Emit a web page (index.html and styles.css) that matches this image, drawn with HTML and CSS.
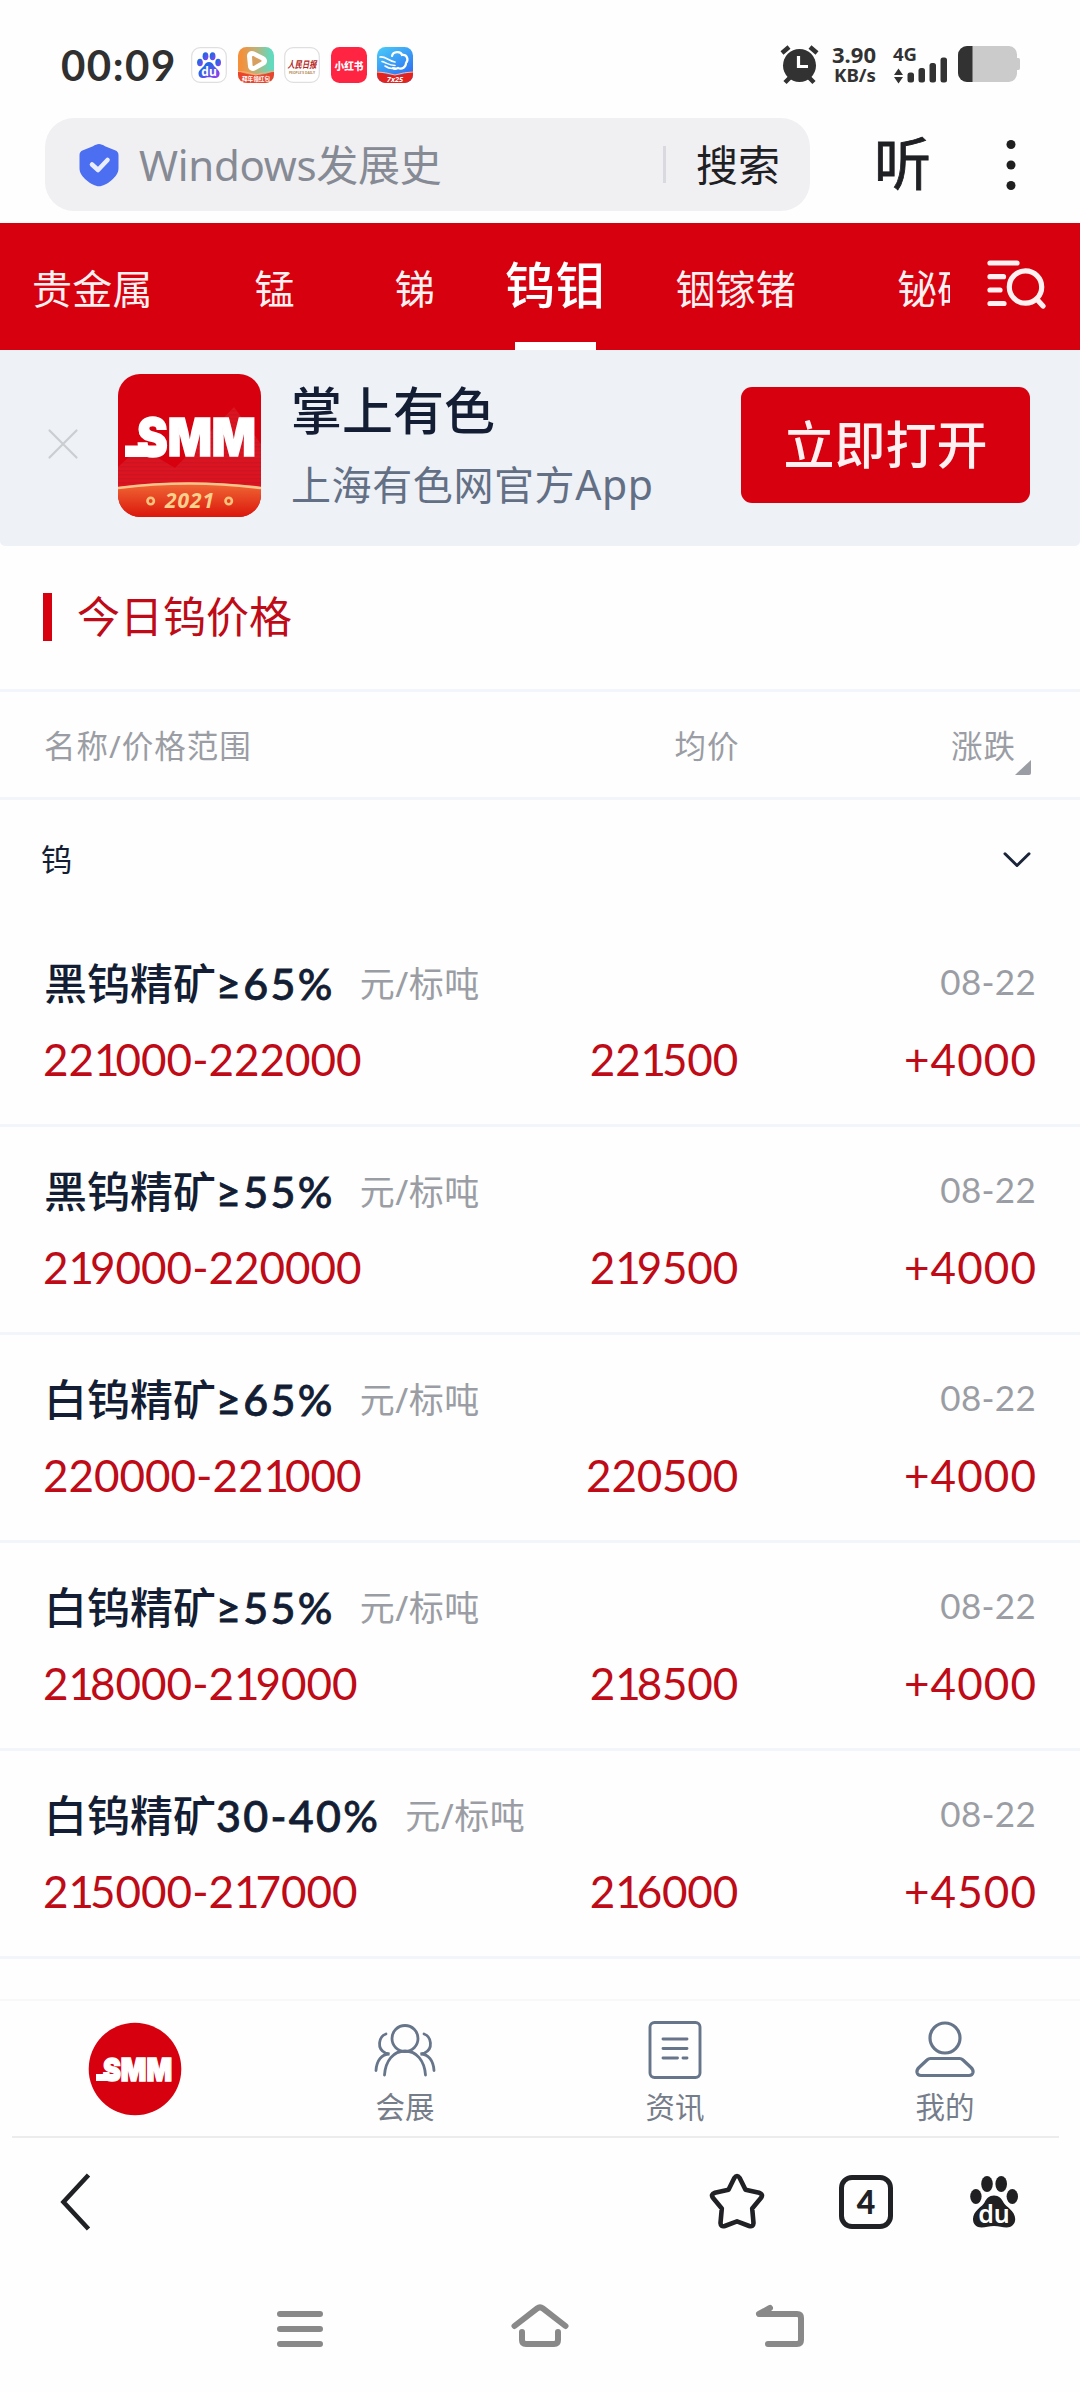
FILE: index.html
```html
<!DOCTYPE html>
<html lang="zh-CN">
<head>
<meta charset="utf-8">
<title>今日钨价格</title>
<link rel="stylesheet" href="styles.css">
</head>
<body>
<svg class="defs" aria-hidden="true">
  <symbol id="paw" viewBox="0 0 48 52">
    <ellipse cx="17" cy="8" rx="5.8" ry="8"/><ellipse cx="31.2" cy="8" rx="5.8" ry="8"/>
    <ellipse cx="5.9" cy="20.5" rx="5.7" ry="7.6"/><ellipse cx="42.3" cy="20.5" rx="5.7" ry="7.6"/>
    <path d="M24 19.500c5 0 7.500 3 9.500 7 2 4 11.700 8.500 11.700 16.500 0 5.500-4 8.500-8.500 8.500-4.500 0-7.700-1.500-12.700-1.500s-8.200 1.500-12.500 1.500c-5 0-8.500-3-8.500-8.500 0-8 9.500-12.500 11.500-16.500 2-4 4.500-7 9.500-7z"/>
  </symbol>
</svg>
<div class="screen">
  <header class="status">
    <span class="clock">00:09</span>
    <div class="apps">
      <svg class="app" viewBox="0 0 36 36"><defs><linearGradient id="pg" x1="0" y1="0" x2="1" y2="1"><stop offset=".3" stop-color="#2468e6"/><stop offset="1" stop-color="#9a3cf0"/></linearGradient></defs><rect x=".7" y=".7" width="34.600" height="34.600" rx="8.500" fill="#fff" stroke="#dfdfe1" stroke-width="1.200"/><svg x="6" y="5" width="24" height="26.500" fill="url(#pg)"><use href="#paw"/></svg><text x="18" y="29" text-anchor="middle" font-size="12" font-weight="700" fill="#fff">du</text></svg>
      <svg class="app" viewBox="0 0 36 36"><defs><linearGradient id="vg"><stop offset=".1" stop-color="#f4903a"/><stop offset=".45" stop-color="#c7ad70"/><stop offset=".9" stop-color="#63d9bd"/></linearGradient></defs><rect width="36" height="36" rx="8.500" fill="url(#vg)"/><path d="M0 24q9 4 18 4t18-4v3.500a8.500 8.500 0 0 1-8.500 8.500h-19a8.500 8.500 0 0 1-8.500-8.500z" fill="#e9452c"/><path d="M0 24.500q8 0 18 3.500 10-3.500 18-3.500" stroke="#ffab79" stroke-width="1.200" fill="none"/><path d="M14 9l10 5-9 5z" fill="none" stroke="#fff" stroke-width="10" stroke-linejoin="round"/><path d="M15 10l7.500 4-7 4z" fill="#d8a060" stroke="#d8a060" stroke-width="2" stroke-linejoin="round"/><text x="18" y="34.400" text-anchor="middle" font-size="5.600" font-weight="700" fill="#fff">拜年领红包</text></svg>
      <svg class="app" viewBox="0 0 36 36"><rect x=".7" y=".7" width="34.600" height="34.600" rx="8.500" fill="#fff" stroke="#dfdfe1" stroke-width="1.200"/><text class="brush" x="3.500" y="20.500" font-size="9.500" fill="#b51f24" textLength="29" lengthAdjust="spacingAndGlyphs">人民日报</text><text x="5" y="27" font-size="3.800" font-weight="700" fill="#b58a55" textLength="26" lengthAdjust="spacingAndGlyphs">PEOPLE'S DAILY</text></svg>
      <svg class="app" viewBox="0 0 36 36"><rect width="36" height="36" rx="8.500" fill="#ff2442"/><text x="3.500" y="22.500" font-size="10.500" font-weight="900" fill="#fff" textLength="29" lengthAdjust="spacingAndGlyphs">小红书</text></svg>
      <svg class="app" viewBox="0 0 36 36"><defs><linearGradient id="cg" x1="0" y1="0" x2=".6" y2="1"><stop stop-color="#49cdf8"/><stop offset="1" stop-color="#2e6df2"/></linearGradient></defs><rect width="36" height="36" rx="8.500" fill="url(#cg)"/><path d="M0 24q9 4 18 4t18-4v3.500a8.500 8.500 0 0 1-8.500 8.500h-19a8.500 8.500 0 0 1-8.500-8.500z" fill="#e3231f"/><path d="M0 25q8 0 18 3 10-3 18-3" stroke="#ffb5a0" stroke-width="1" fill="none"/><g fill="none" stroke="#fff" stroke-linecap="round"><path d="M3 10c5-1 9 4 15 5M5 14.500c4 1 7 4 13 4M8 19c3 2 7 3 10 2" stroke-width="1.600"/><path d="M15 9c1-5 9-5 10-1 5-1 7 5 4 8 0 4-4 7-8 5-2 1-4 1-5 0" stroke-width="2.200"/></g><text x="18" y="34.500" text-anchor="middle" font-size="7.500" font-weight="700" font-style="italic" fill="#fff">7x25</text></svg>
    </div>
    <svg class="sys" viewBox="0 0 244 40">
      <g fill="none" stroke="#323232" stroke-width="4.500"><path d="M2 7l7-6M30 1l7 6"/><path d="M5 36.500l5-5M34 36.500l-5-5"/></g><circle cx="19.500" cy="19.500" r="16.500" fill="#323232"/><path d="M18.500 10v10.500h9.500" fill="none" stroke="#fff" stroke-width="3.200"/>
      <g fill="#323232"><text x="52" y="16.500" font-size="22" font-weight="700" textLength="44" lengthAdjust="spacingAndGlyphs">3.90</text><text x="54" y="35.500" font-size="18.500" font-weight="700" textLength="42" lengthAdjust="spacingAndGlyphs">KB/s</text><text x="113" y="14.500" font-size="18.500" font-weight="700" textLength="24" lengthAdjust="spacingAndGlyphs">4G</text>
      <path d="M114 29l4.500-6.500 4.500 6.500zM114 31l4.500 6.500 4.500-6.500z"/><rect x="127.500" y="26.500" width="6.500" height="10" rx="2.500"/><rect x="138.500" y="22" width="6.500" height="14.500" rx="2.500"/><rect x="149.500" y="17" width="6.500" height="19.500" rx="2.500"/><rect x="160.500" y="11.500" width="6.500" height="25" rx="2.500"/></g>
      <path d="M187 0h42a8.500 8.500 0 0 1 8 9v3h1.500q1.500 0 1.500 2v8q0 2-1.500 2h-1.500v3a8.500 8.500 0 0 1-8 9h-42a9 9 0 0 1-9-9v-18a9 9 0 0 1 9-9z" fill="#cbcbcb"/><path d="M187 0h5.500v36h-5.500a9 9 0 0 1-9-9v-18a9 9 0 0 1 9-9z" fill="#323232"/>
    </svg>
  </header>

  <div class="address">
    <div class="search">
      <svg class="shield" viewBox="0 0 40 42"><path d="M20 0c2 0 4 1 6 2.200l10 4c2.500 1 3.500 2.500 3.500 5v13c0 5-3 8.500-7 12-4 3.500-9 6-12.500 6s-8.500-2.500-12.500-6c-4-3.500-7-7-7-12v-13c0-2.500 1-4 3.500-5l10-4c2-1.200 4-2.200 6-2.200z" fill="#4c6ef1"/><path d="M13 20.500l6 5.500 9.500-10" fill="none" stroke="#e9edfc" stroke-width="4.600" stroke-linecap="round" stroke-linejoin="round"/></svg>
      <span class="query">Windows发展史</span>
      <span class="rule"></span>
      <span class="go">搜索</span>
    </div>
    <span class="listen">听</span>
    <svg class="more" viewBox="0 0 10 52"><g fill="#1f1f20"><circle cx="5" cy="5.500" r="4.500"/><circle cx="5" cy="26" r="4.500"/><circle cx="5" cy="46.500" r="4.500"/></g></svg>
  </div>

  <nav class="metals">
    <div class="tabs">
      <span>贵金属</span><span class="t2">锰</span><span class="t3">锑</span><span class="active">钨钼</span><span class="t5">铟镓锗</span><span class="t6">铋硒碲</span>
    </div>
    <svg class="find" viewBox="0 0 60 50"><g fill="none" stroke="#fff0f1" stroke-width="5.200" stroke-linecap="round"><path d="M3 5h27M3 18.700h13.500M3 32h10M3 45.500h14"/><circle cx="38.500" cy="29" r="16.200"/><path d="M50.500 42l5.500 6"/></g></svg>
  </nav>

  <section class="promo">
    <svg class="close" viewBox="0 0 30 30"><path d="M1.500 1.500l27 27M28.500 1.500l-27 27" stroke="#cbcdd1" stroke-width="2.200" stroke-linecap="round"/></svg>
    <svg class="logo" viewBox="0 0 143 143">
      <defs><clipPath id="lc"><rect width="143" height="143" rx="22"/></clipPath><linearGradient id="rib" x1="0" y1="0" x2="0" y2="1"><stop stop-color="#f06a36"/><stop offset="1" stop-color="#db160c"/></linearGradient>
      <pattern id="st" width="4" height="4" patternUnits="userSpaceOnUse"><rect width="4" height="1.500" fill="#b91622"/></pattern></defs>
      <g clip-path="url(#lc)"><rect width="143" height="143" fill="#d7000f"/><path d="M0 93l22-20 35 21 59-61 27 37v50h-143z" fill="#dc1421"/><path d="M0 93l22-20 35 21 59-61 27 37v50h-143z" fill="url(#st)" opacity=".45"/>
      <path d="M0 113q71-9 143 0v30h-143z" fill="url(#rib)"/><path d="M0 114q71-9 143 0" fill="none" stroke="#ffc58a" stroke-width="2.600"/></g>
      <text class="mark" x="19" y="82" font-size="52" textLength="119" lengthAdjust="spacingAndGlyphs">SMM</text><path d="M7 71.500h34v11.500h-34z" fill="#fff"/>
      <text x="47" y="134" font-size="21" font-weight="700" font-style="italic" fill="#ffd08c" textLength="49">2021</text>
      <g fill="none" stroke="#ffc27c" stroke-width="2.600"><circle cx="32.700" cy="127" r="3.200"/><circle cx="110.700" cy="127" r="3.200"/></g>
    </svg>
    <div class="pitch"><div class="name">掌上有色</div><div class="sub">上海有色网官方<span>App</span></div></div>
    <div class="open">立即打开</div>
  </section>

  <main class="prices">
    <h1 class="title">今日钨价格</h1>
    <div class="line head"><span>名称/价格范围</span><span class="avg">均价</span><span class="chg">涨跌</span><svg class="sort" viewBox="0 0 16 15"><path d="M0 15l16-15v13q0 2-2 2z" fill="#9b9da4"/></svg></div>
    <div class="group"><span>钨</span><svg class="chev" viewBox="0 0 28 16"><path d="M2 1.800l12 11.700 12-11.700" fill="none" stroke="#1b2539" stroke-width="3" stroke-linecap="round" stroke-linejoin="round"/></svg></div>

    <article class="item"><div class="line"><b>黑钨精矿<i>≥65%</i></b><span class="unit">元/标吨</span><time>08-22</time></div><div class="line num"><span>22<u>1</u>000-222000</span><span class="avg">22<u>1</u>500</span><span class="chg">+4000</span></div></article>
    <article class="item"><div class="line"><b>黑钨精矿<i>≥55%</i></b><span class="unit">元/标吨</span><time>08-22</time></div><div class="line num"><span>2<u>1</u>9000-220000</span><span class="avg">2<u>1</u>9500</span><span class="chg">+4000</span></div></article>
    <article class="item"><div class="line"><b>白钨精矿<i>≥65%</i></b><span class="unit">元/标吨</span><time>08-22</time></div><div class="line num"><span>220000-22<u>1</u>000</span><span class="avg">220500</span><span class="chg">+4000</span></div></article>
    <article class="item"><div class="line"><b>白钨精矿<i>≥55%</i></b><span class="unit">元/标吨</span><time>08-22</time></div><div class="line num"><span>2<u>1</u>8000-2<u>1</u>9000</span><span class="avg">2<u>1</u>8500</span><span class="chg">+4000</span></div></article>
    <article class="item"><div class="line"><b>白钨精矿<i>30-40%</i></b><span class="unit">元/标吨</span><time>08-22</time></div><div class="line num"><span>2<u>1</u>5000-2<u>1</u>7000</span><span class="avg">2<u>1</u>6000</span><span class="chg">+4500</span></div></article>
  </main>

  <nav class="sections">
    <div class="sec"><svg class="disc" viewBox="0 0 94 94"><circle cx="47" cy="47" r="46.300" fill="#d7000f"/><text class="mark" x="15" y="58.500" font-size="31.500" textLength="69" lengthAdjust="spacingAndGlyphs">SMM</text><path d="M8 52h20v7h-20z" fill="#fff"/></svg></div>
    <div class="sec"><svg class="ico" viewBox="0 0 64 60"><g fill="none" stroke="#66758a" stroke-width="2.800" stroke-linecap="round"><circle cx="32" cy="17.500" r="13"/><path d="M11.500 54c1-14.500 9-24 20.500-24s19.500 9.500 20.500 24"/><path d="M13 13c-7.500 2.500-9.500 15-.5 19l4 1c-8 0-13 7-13.500 16.500M51 13c7.500 2.500 9.500 15 .5 19l-4 1c8 0 13 7 13.500 16.500"/></g></svg><span>会展</span></div>
    <div class="sec"><svg class="ico" viewBox="0 0 64 60"><g fill="none" stroke="#66758a" stroke-width="2.900" stroke-linecap="round"><rect x="7" y="1.500" width="50" height="55" rx="4.500"/><path d="M20 18h24M20 27.500h24M20 37h14.500M40 37h4"/></g></svg><span>资讯</span></div>
    <div class="sec"><svg class="ico" viewBox="0 0 64 60"><g fill="none" stroke="#66758a" stroke-width="3.200" stroke-linejoin="round"><circle cx="32" cy="17" r="15"/><path d="M17.500 37.500h29q2 0 3.500 1.500l8 7.500q2.500 2.500 2 5-.7 3-4 3h-48q-3.300 0-4-3-.5-2.500 2-5l8-7.500q1.500-1.500 3.500-1.500z"/></g></svg><span>我的</span></div>
  </nav>

  <div class="toolbar">
    <svg class="prev" viewBox="0 0 32 60"><path d="M28.500 3l-25 27 25 27" fill="none" stroke="#202125" stroke-width="4.600"/></svg>
    <svg class="star" viewBox="0 0 56 56"><path d="M25.300 4q2.700-4 5.400 0l5.800 11.800 13.600 3q4.500 1.500 2 5l-8.900 10.700 1.300 14.500q-.3 4.300-4.300 3l-12.200-4.700-12.200 4.700q-4 1.300-4.300-3l1.300-14.500-8.900-10.700q-2.500-3.500 2-5l13.600-3z" fill="none" stroke="#202125" stroke-width="4.600" stroke-linejoin="round"/></svg>
    <div class="count">4</div>
    <svg class="du" viewBox="0 0 48 52"><g fill="#202022"><use href="#paw"/></g><text x="24" y="46.500" text-anchor="middle" font-size="25" fill="#fff" font-weight="600">du</text></svg>
  </div>

  <footer class="keys">
    <svg viewBox="0 0 60 50"><path d="M10 12h40M10 27h40M10 42h40"/></svg>
    <svg viewBox="0 0 60 50"><path d="M4.500 24l22.700-17.600q2.800-2.200 5.600 0l22.700 17.600M12 30v8q0 4 4 4h28q4 0 4-4v-8"/></svg>
    <svg viewBox="0 0 60 50"><path d="M20 6l-11 6h38q4 0 4 4v22q0 4-4 4h-29"/></svg>
  </footer>
</div>
</body>
</html>
```
FILE: styles.css
```css
* { box-sizing: border-box; }
body { margin: 0; background: #fefefe; font-family: "Noto Sans", "Noto Sans CJK SC", sans-serif; color: #131d33; }
svg { display: block; flex: none; overflow: visible; }
.defs { position: absolute; width: 0; height: 0; }
.screen { width: 1080px; height: 2392px; display: flex; flex-direction: column; overflow: hidden; }
.screen > * { flex: none; }
.mark { font-family: "Inter", sans-serif; font-weight: 900; fill: #fff; stroke: #fff; stroke-width: 1.5; }

.status { height: 118px; padding: 12px 60px 0 61px; display: flex; align-items: center; }
.clock { width: 130px; font: 700 42px/1 "Lato", sans-serif; letter-spacing: 1.500px; color: #303030; }
.apps { display: flex; gap: 10.500px; }
.app { width: 36px; height: 36px; }
.brush { font-style: italic; font-weight: 700; }
.sys { width: 244px; height: 40px; margin: 2px -4px 0 auto; }

.address { height: 105px; padding: 0 0 12px 45px; display: flex; align-items: center; }
.search { width: 765px; height: 93px; border-radius: 29px; background: #f0f0f3; display: flex; align-items: center; padding: 0 30px 0 34px; }
.shield { width: 40px; height: 42px; }
.query { margin-left: 20px; font-size: 42px; line-height: 60px; letter-spacing: -.3px; color: #868a94; white-space: nowrap; }
.rule { width: 3px; height: 37px; margin-left: auto; background: #d9d9e0; }
.go { margin-left: 30px; font-size: 42px; line-height: 60px; color: #1f2024; }
.listen { width: 58px; margin: 0 0 4px 64px; font-size: 57px; line-height: 80px; color: #1f2024; -webkit-text-stroke: .8px #1f2024; }
.more { width: 10px; height: 52px; margin-left: 74px; }

.metals { height: 127px; background: #d7000f; display: flex; }
.tabs { width: 950px; overflow: hidden; padding-left: 32px; display: flex; font-size: 40px; line-height: 131px; letter-spacing: .2px; color: #fff0f1; white-space: nowrap; }
.tabs span { flex: none; }
.t2 { margin-left: 102px; }
.t3 { margin-left: 100px; }
.t5 { margin-left: 70px; }
.t6 { margin-left: 101px; }
.tabs .active { margin-left: 70px; font-size: 50px; font-weight: 500; line-height: 125px; color: #fff; height: 127px; background: linear-gradient(#fff, #fff) 50% 100% / 81px 8px no-repeat; }
.find { width: 60px; height: 50px; margin: 35px 0 0 37px; }

.promo { height: 196px; background: #eef1f6; border-radius: 0 0 5px 5px; padding-left: 48px; display: flex; align-items: center; }
.close { width: 30px; height: 30px; margin-bottom: 9px; }
.logo { width: 143px; height: 143px; margin: 0 0 5px 40px; }
.pitch { width: 450px; margin: 0 0 2px 30px; white-space: nowrap; }
.name { font-size: 51px; line-height: 74px; font-weight: 500; }
.sub { font-size: 40px; line-height: 74px; letter-spacing: .6px; color: #626f84; }
.sub span { font-size: 41px; }
.open { width: 289px; height: 116px; margin-bottom: 6px; border-radius: 11px; background: #d7000f; color: #fff0f1; font-size: 51px; font-weight: 500; line-height: 114px; text-align: center; }

.prices { height: 1453px; }
.title { margin: 0; height: 146px; padding: 0 0 1px 43px; border-bottom: 3px solid #f2f5f9; display: flex; align-items: center; line-height: 60px; font-size: 43px; font-weight: 400; color: #be0b17; }
.title::before { content: ""; width: 9px; height: 48px; margin-right: 25px; background: #d7000f; }
.line { position: relative; display: grid; grid-template-columns: 1fr 180px 298px; padding: 0 44px; align-items: center; }
.avg, .chg { text-align: right; }
.head { height: 108px; padding-bottom: 2px; border-bottom: 3px solid #f2f5f9; font-size: 31.500px; letter-spacing: 1px; color: #9b9da4; }
.head .avg { margin-right: -1.500px; }
.head .chg { padding-right: 20px; }
.sort { position: absolute; right: 49px; top: 68px; width: 16px; height: 15px; }
.group { height: 119px; padding: 0 49px 4px 41px; display: flex; align-items: center; justify-content: space-between; font-size: 31px; }
.chev { width: 28px; height: 16px; margin-top: 4px; }
.item { height: 208px; padding-top: 32px; border-bottom: 3px solid #f2f5f9; }
.item .line:first-child { display: flex; height: 60px; }
.item b { font-size: 43px; font-weight: 500; }
.item i { font-style: normal; font-family: "Lato", "Noto Sans", sans-serif; letter-spacing: 2.300px; -webkit-text-stroke: .8px currentColor; }
.item u { text-decoration: none; letter-spacing: -4px; }
.unit { margin-left: 25px; font-size: 35px; letter-spacing: .5px; color: #9b9da4; }
.item time { margin-left: auto; font: 400 35px "Lato", sans-serif; letter-spacing: .3px; color: #9b9da4; }
.num { height: 95px; padding-left: 43px; font: 400 44px "Lato", sans-serif; color: #be0b17; }
.num .avg { letter-spacing: -.2px; }
.num .chg { letter-spacing: 1.100px; margin-right: -1.100px; }

.sections { height: 139px; border-top: 2px solid #f8f8f9; display: grid; grid-template-columns: repeat(4, 1fr); background: linear-gradient(#ececee, #ececee) 12px 100% / 1047px 2px no-repeat; }
.sec { display: flex; flex-direction: column; align-items: center; padding-top: 20px; font-size: 29.500px; color: #767d8a; }
.sec span { line-height: 44px; margin-top: 4px; }
.ico { width: 64px; height: 60px; }
.disc { width: 94px; height: 94px; margin-top: 1px; }

.toolbar { height: 128px; padding: 0 61px 0 60px; display: flex; align-items: center; }
.prev { width: 32px; height: 60px; }
.star { width: 56px; height: 56px; margin-left: 617px; }
.count { width: 54px; height: 54px; margin-left: 74px; border: 5px solid #202125; border-radius: 13px; font: 900 32px/44px "Lato", sans-serif; text-align: center; color: #202125; }
.du { width: 48px; height: 52px; margin-left: 77px; }
.keys { height: 126px; padding: 36px 270px 0; display: flex; justify-content: space-between; }
.keys svg { width: 60px; height: 50px; fill: none; stroke: #898989; stroke-width: 6; stroke-linecap: round; stroke-linejoin: round; }
```
